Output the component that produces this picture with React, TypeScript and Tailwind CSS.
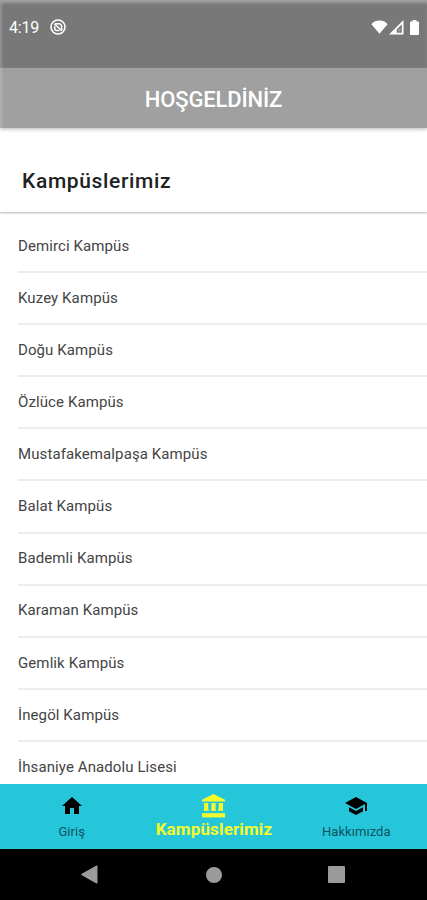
import { useState } from 'react'
import { MdHome, MdSchool } from 'react-icons/md'

const campuses = [
  'Demirci Kampüs',
  'Kuzey Kampüs',
  'Doğu Kampüs',
  'Özlüce Kampüs',
  'Mustafakemalpaşa Kampüs',
  'Balat Kampüs',
  'Bademli Kampüs',
  'Karaman Kampüs',
  'Gemlik Kampüs',
  'İnegöl Kampüs',
  'İhsaniye Anadolu Lisesi',
]

function BankIcon({ className }: { className?: string }) {
  return (
    <svg className={className} viewBox="0 0 27 27" fill="currentColor">
      <path d="M13.5 2 25 7.8v1.7H2V7.8z" />
      <path d="M4 11h4.2v6.6h.8v1.2H3.8v-1.2H4zM11.4 11h4.2v6.6h.4v1.2h-5v-1.2h.4zM18.8 11H23v6.6h.2v1.2H18v-1.2h.8z" />
      <path d="M2 21.2h23v4.2H2z" />
    </svg>
  )
}

const tabs = [
  { id: 'home', label: 'Giriş', Icon: MdHome },
  { id: 'campuses', label: 'Kampüslerimiz', Icon: BankIcon },
  { id: 'about', label: 'Hakkımızda', Icon: MdSchool },
]

function StatusBar() {
  return (
    <div className="flex h-[68px] items-start justify-between bg-[#787878] pt-[18px] pr-[7px] pl-[9px] text-white shadow-[inset_0_4px_3px_-1px_#a0a0a0,inset_3px_0_3px_-1px_#929292]">
      <div className="flex h-5 items-center">
        <span className="w-[41px] text-[16px] leading-5 tracking-[-0.2px]">4:19</span>
        <svg className="mb-[2px] h-4 w-4" viewBox="0 0 16 16" fill="none" stroke="currentColor">
          <circle cx="8" cy="8" r="7" strokeWidth="1.6" />
          <path d="M5 4.7h4a2.6 2.6 0 0 1 2.6 2.6v3.6M4.7 7v2.2A2.3 2.3 0 0 0 7 11.5h2.4M4.4 4.8l7.4 7" strokeWidth="1.5" />
        </svg>
      </div>
      <div className="flex h-5 items-center">
        <svg className="mr-[1px] mb-[2px] h-[14px] w-[17px]" viewBox="0 0 17 14" fill="currentColor">
          <path d="M8.5 13.8.4 4.2C2.5 1.6 5.3.5 8.5.5s6 1.1 8.1 3.7z" />
        </svg>
        <svg className="mr-[6px] mb-[2px] h-[15px] w-[15px]" viewBox="0 0 15 15" fill="currentColor">
          <path fillRule="evenodd" d="M0 14.5 14.5 0v14.5zM12.8 4.2 7.8 9.2v3.6h5z" />
          <path d="M9.5 8.5h1.8v2.8H9.5z" opacity="0.35" />
        </svg>
        <svg className="mr-px mb-[2px] h-[15px] w-[9px]" viewBox="0 0 9 15" fill="currentColor">
          <path d="M2.5 0h4v1.5H8a1 1 0 0 1 1 1V14a1 1 0 0 1-1 1H1a1 1 0 0 1-1-1V2.5a1 1 0 0 1 1-1h1.5z" />
        </svg>
      </div>
    </div>
  )
}

function SystemNav() {
  return (
    <div className="grid h-[51px] shrink-0 grid-cols-3 bg-black text-[#9b9b9b]">
      <div className="flex items-center justify-center pl-[37px]">
        <svg className="h-[19px] w-[17px]" viewBox="0 0 17 19" fill="currentColor">
          <path d="M16.5 1.2v16.6a.8.8 0 0 1-1.1.7L.8 10.2a.8.8 0 0 1 0-1.4L15.4.5a.8.8 0 0 1 1.1.7z" />
        </svg>
      </div>
      <div className="flex items-center justify-center pl-px">
        <span className="h-4 w-4 rounded-full bg-current" />
      </div>
      <div className="flex items-center justify-center pr-[38px]">
        <span className="h-[17px] w-[17px] rounded-[1px] bg-current" />
      </div>
    </div>
  )
}

export default function App() {
  const [active, setActive] = useState('campuses')

  return (
    <div className="flex h-[900px] w-full flex-col overflow-hidden bg-white font-['Roboto',sans-serif]">
      <header className="relative shrink-0 shadow-[0_1px_4px_rgba(0,0,0,0.3)]">
        <StatusBar />
        <div className="flex h-[60px] items-center justify-center bg-[#a0a0a0] pt-[2px] shadow-[inset_3px_0_3px_-1px_#b2b2b2]">
          <h1 className="text-[22px] font-medium tracking-[-0.15px] text-white">HOŞGELDİNİZ</h1>
        </div>
      </header>

      <div className="relative flex h-[84px] shrink-0 items-end pb-[17px] pl-[22px] shadow-[0_1px_2px_rgba(0,0,0,0.3)]">
        <h2 className="text-[21px] leading-7 font-medium tracking-[0.65px] text-[#222]">Kampüslerimiz</h2>
      </div>

      {/* Campus list */}
      <ul className="min-h-0 flex-1 overflow-hidden pt-[9px] pl-[18px]">
        {campuses.map(name => (
          <li key={name} className="flex h-[52.1px] items-center border-b-2 border-[#ececec] text-[15px] tracking-[0.1px] text-[#444]">
            {name}
          </li>
        ))}
      </ul>

      {/* Bottom tabs */}
      <nav className="grid h-[65px] shrink-0 grid-cols-3 bg-[#26c6da]">
        {tabs.map(({ id, label, Icon }) => {
          const selected = id === active
          return (
            <button
              key={id}
              onClick={() => setActive(id)}
              className={`flex flex-col items-center pl-px ${selected ? 'pt-[8px] text-[#f4fb2a]' : 'pt-[10px] text-black'}`}
            >
              <Icon className={selected ? 'h-[27px] w-[27px]' : 'h-6 w-6'} />
              <span
                className={
                  selected
                    ? 'text-[17px] leading-5 font-bold tracking-[0.15px]'
                    : 'mt-[4px] text-[13px] leading-5 tracking-[0.05px] text-[#0b545e]'
                }
              >
                {label}
              </span>
            </button>
          )
        })}
      </nav>

      <SystemNav />
    </div>
  )
}
